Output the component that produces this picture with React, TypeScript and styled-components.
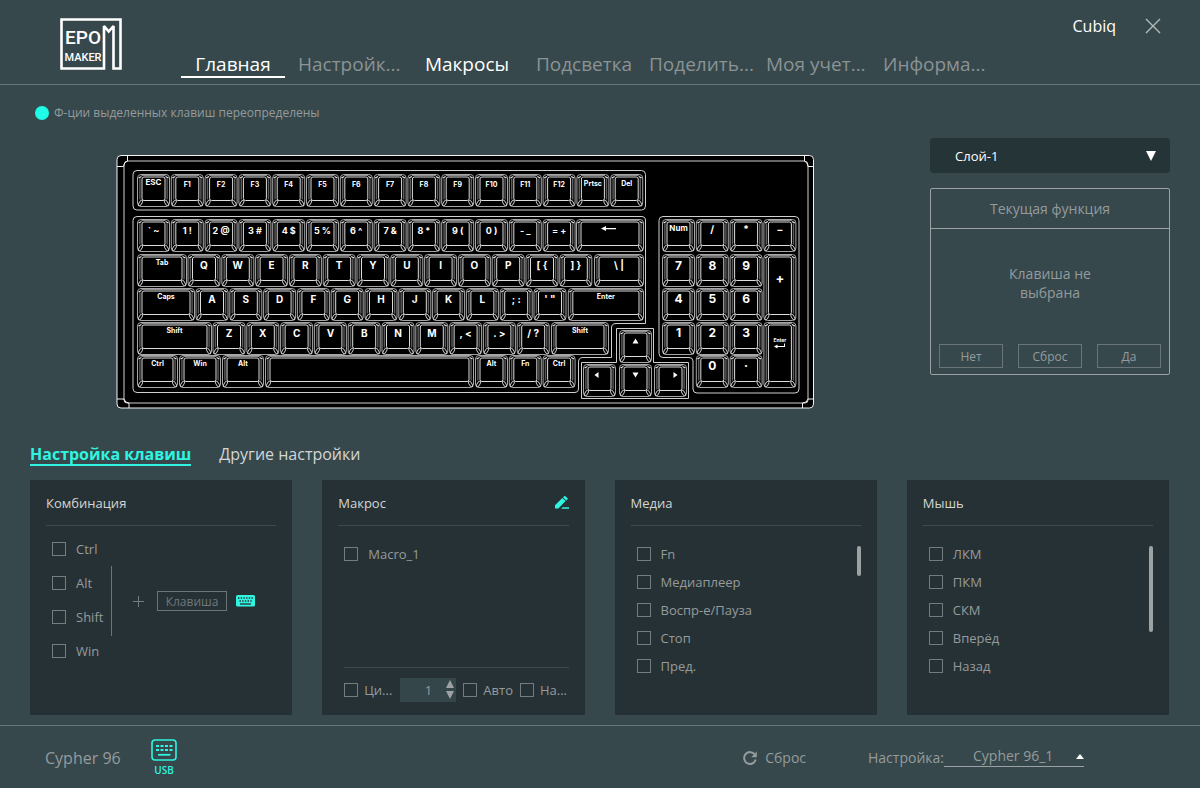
import React from "react";
import styled, { createGlobalStyle, css } from "styled-components";

const color = {
  page: "#36484c",
  card: "#263135",
  field: "#243437",
  line: "#6a7577",
  softLine: "#3d4b4f",
  frame: "#9aa2a4",
  box: "#737c7f",
  text: "#959b9c",
  title: "#d3d6d6",
  white: "#ffffff",
  accent: "#2ff5e0",
};

const GlobalStyle = createGlobalStyle`
  *, *::before, *::after { box-sizing: border-box; }
  body {
    margin: 0;
    background: ${color.page};
    color: ${color.text};
    font-family: "Open Sans", "Noto Sans", sans-serif;
    font-size: 13px;
    line-height: 18px;
  }
  button, input, select { font: inherit; color: inherit; }
  button { padding: 0; background: none; border: 0; cursor: pointer; }
`;

const Page = styled.div`
  min-height: 100vh;
  display: flex;
  flex-direction: column;
`;

/* ---------- header ---------- */

const Header = styled.header`
  display: flex;
  height: 85px;
  padding: 0 35px 0 60px;
  border-bottom: 1px solid ${color.line};
`;

const Logo = styled.svg`
  flex: none;
  width: 62px;
  height: 52px;
  margin-top: 18px;
`;

const Nav = styled.nav`
  display: flex;
  align-items: flex-end;
  gap: 13px;
  margin-left: 59px;
  padding-bottom: 6px;
`;

const NavItem = styled.button<{ $bright?: boolean; $active?: boolean; $cut?: boolean }>`
  width: 104px;
  height: 30px;
  padding-top: 4px;
  font-size: 19px;
  line-height: 24px;
  white-space: nowrap;
  text-align: ${(p) => (p.$cut ? "left" : "center")};
  color: ${(p) => (p.$bright ? color.white : "#8b9394")};
  border-bottom: 2px solid ${(p) => (p.$active ? color.white : "transparent")};
`;

const Account = styled.div`
  display: flex;
  align-items: center;
  gap: 25px;
  height: 24px;
  margin: 14px 0 0 auto;
  font-size: 16px;
  color: ${color.white};
`;

const CloseButton = styled.button`
  display: flex;
  align-items: center;
  justify-content: center;
  width: 24px;
  height: 24px;
  color: #b4babb;
`;

/* ---------- workspace ---------- */

const Main = styled.main`
  display: flex;
  flex-direction: column;
  padding: 18px 30px 10px;
`;

const Hint = styled.p`
  display: flex;
  align-items: center;
  gap: 5px;
  height: 20px;
  margin: 0 0 15px 5px;
  font-size: 12px;
`;

const Dot = styled.span`
  width: 14px;
  height: 14px;
  border-radius: 50%;
  background: #1ffbe6;
`;

const Stage = styled.section`
  display: flex;
  gap: 30px;
`;

const Deck = styled.div`
  flex: 1;
  min-width: 0;
  display: flex;
  justify-content: center;
  padding-top: 16px;
`;

const Board = styled.svg`
  display: block;
  width: 698px;
  max-width: 100%;
  height: auto;
  font-family: Inter, "Open Sans", sans-serif;
  font-weight: 700;
`;

const Side = styled.aside`
  flex: none;
  width: 240px;
  display: flex;
  flex-direction: column;
  gap: 15px;
`;

const Picker = styled.div`
  position: relative;
  svg {
    position: absolute;
    pointer-events: none;
  }
`;

const LayerPicker = styled(Picker)`
  svg {
    right: 14px;
    top: 13px;
  }
`;

const LayerSelect = styled.select`
  display: block;
  appearance: none;
  width: 100%;
  height: 35px;
  padding: 0 25px;
  border: 0;
  border-radius: 4px;
  background: ${color.field};
  color: ${color.white};
  font-size: 13px;
`;

const FunctionBox = styled.section`
  display: flex;
  flex-direction: column;
  height: 187px;
  border: 1px solid ${color.frame};
  border-radius: 2px;
  font-size: 14px;
`;

const FunctionTitle = styled.h2`
  margin: 0;
  height: 40px;
  border-bottom: 1px solid ${color.frame};
  font-size: 14px;
  font-weight: 400;
  line-height: 40px;
  text-align: center;
`;

const FunctionText = styled.p`
  flex: 1;
  width: 100px;
  margin: 0 auto;
  padding-top: 35px;
  line-height: 19px;
  text-align: center;
`;

const FunctionActions = styled.div`
  display: flex;
  justify-content: space-between;
  padding: 0 8px 6px;
`;

const SmallButton = styled.button`
  width: 64px;
  height: 24px;
  padding-top: 2px;
  border: 1px solid ${color.line};
  font-size: 12px;
  line-height: 20px;
`;

/* ---------- setting tabs and cards ---------- */

const Tabs = styled.div`
  display: flex;
  gap: 28px;
  margin: 34px 0 14px;
`;

const Tab = styled.button<{ $active?: boolean }>`
  height: 23px;
  padding-top: 2px;
  font-size: 16px;
  line-height: 19px;
  color: ${color.title};
  border-bottom: 2px solid transparent;
  ${(p) =>
    p.$active &&
    css`
      color: ${color.accent};
      font-weight: 700;
      border-color: ${color.accent};
    `}
`;

const Cards = styled.div`
  display: grid;
  grid-template-columns: repeat(4, minmax(0, 1fr));
  gap: 30px;
  margin-right: 1px;
`;

const Card = styled.section`
  display: flex;
  flex-direction: column;
  height: 235px;
  padding: 0 16px;
  background: ${color.card};
`;

const CardHead = styled.header`
  display: flex;
  align-items: center;
  justify-content: space-between;
  height: 46px;
  border-bottom: 1px solid ${color.softLine};
`;

const CardTitle = styled.h3`
  margin: 0;
  font-size: 13px;
  font-weight: 400;
  color: ${color.title};
`;

const CardBody = styled.div`
  flex: 1;
  display: flex;
  justify-content: space-between;
  padding: 19px 0 0 6px;
`;

const List = styled.ul<{ $step: number }>`
  display: flex;
  flex-direction: column;
  gap: ${(p) => p.$step - 18}px;
  margin: 0;
  padding: 0;
  list-style: none;
`;

const CheckLabel = styled.label<{ $gap?: number }>`
  display: flex;
  align-items: center;
  gap: ${(p) => p.$gap ?? 10}px;
  white-space: nowrap;
`;

const CheckBox = styled.input.attrs({ type: "checkbox" })`
  appearance: none;
  flex: none;
  width: 14px;
  height: 14px;
  margin: 0;
  border: 1px solid ${color.box};
  &:checked {
    background: ${color.accent};
  }
`;

const Thumb = styled.div<{ $length: number }>`
  width: 4px;
  height: ${(p) => p.$length}px;
  margin-top: 1px;
  border-radius: 2px;
  background: #9da2a3;
`;

const ComboBody = styled.div`
  display: flex;
  align-items: flex-start;
  padding: 14px 0 0 6px;
`;

const Modifiers = styled.div`
  width: 59px;
`;

const Bracket = styled.div`
  width: 1px;
  height: 70px;
  margin-top: 26px;
  background: ${color.line};
`;

const KeyEntry = styled.div`
  display: flex;
  align-items: center;
  margin: 51px 0 0 21px;
`;

const KeyInput = styled.input`
  width: 70px;
  height: 20px;
  margin: 0 9px 0 13px;
  padding: 0;
  border: 1px solid ${color.line};
  background: transparent;
  font-size: 12px;
  text-align: center;
  &::placeholder {
    color: #6f787b;
    opacity: 1;
  }
`;

const IconButton = styled.button<{ $muted?: boolean }>`
  display: flex;
  color: ${(p) => (p.$muted ? "#9da2a3" : color.accent)};
`;

const MacroFoot = styled.div`
  display: flex;
  align-items: center;
  height: 48px;
  margin-left: 6px;
  padding-bottom: 4px;
  border-top: 1px solid ${color.softLine};
  gap: 7px;
`;

const Spinner = styled.div`
  display: flex;
  width: 56px;
  height: 24px;
  background: #34464a;
  margin-left: 1px;
`;

const SpinnerInput = styled.input.attrs({ type: "number" })`
  appearance: textfield;
  flex: 1;
  min-width: 0;
  padding: 0 0 0 12px;
  border: 0;
  background: transparent;
  text-align: center;
  &::-webkit-inner-spin-button {
    appearance: none;
    margin: 0;
  }
`;

const SpinnerArrows = styled.div`
  display: flex;
  flex-direction: column;
  align-items: center;
  justify-content: center;
  gap: 3px;
  width: 12px;
`;

/* ---------- footer ---------- */

const Footer = styled.footer`
  display: flex;
  align-items: center;
  height: 63px;
  margin-top: auto;
  padding: 2px 116px 0 45px;
  border-top: 1px solid ${color.line};
  font-size: 14px;
`;

const DeviceName = styled.span`
  width: 78px;
  font-size: 16px;
  white-space: nowrap;
`;

const Connection = styled.div`
  display: flex;
  flex-direction: column;
  align-items: center;
  gap: 2px;
  margin-left: 28px;
  color: ${color.accent};
  font-size: 10px;
  font-weight: 600;
  line-height: 14px;
`;

const ResetButton = styled.button`
  display: flex;
  align-items: center;
  gap: 8px;
  margin-left: auto;
`;

const ProfileLabel = styled.label`
  margin-left: 62px;
`;

const ProfilePicker = styled(Picker)`
  svg {
    right: 0;
    top: 9px;
  }
`;

const ProfileSelect = styled.select`
  display: block;
  appearance: none;
  width: 140px;
  height: 22px;
  margin-bottom: 4px;
  padding: 0 0 0 29px;
  border: 0;
  border-bottom: 1px solid ${color.frame};
  border-radius: 0;
  background: transparent;
`;

/* ---------- keyboard drawing ---------- */

type KeySpec = {
  x: number;
  y: number;
  w: number;
  h: number;
  label: string;
  size: number;
  dy: number;
};

const UNIT = 33.8;
const SMALL = 7;

const run = (labels: string[], x: number, y: number, size: number, dy = 10): KeySpec[] =>
  labels.map((label, i) => ({ x: x + i * UNIT, y, w: 32, h: 32, label, size, dy }));

const wide = (label: string, x: number, end: number, y: number, dy = 8, size = SMALL): KeySpec => ({
  x,
  y,
  w: end - x,
  h: 32,
  label,
  size,
  dy,
});

const KEYS: KeySpec[] = [
  ...run(["ESC"], 21.5, 20.5, 8, 8),
  ...run(["F1", "F2", "F3", "F4", "F5", "F6", "F7", "F8", "F9", "F10", "F11", "F12"], 55.3, 20.5, SMALL),
  ...run(["Prtsc", "Del"], 460.9, 20.5, SMALL, 9),
  ...run(["` ~", "1 !", "2 @", "3 #", "4 $", "5 %", "6 ^", "7 &", "8 *", "9 (", "0 )", "- _", "= +"], 21.5, 65.5, 9, 11),
  wide("", 460.5, 527.5, 65.5),
  wide("Tab", 21.5, 70.5, 100.5),
  ...run(["Q", "W", "E", "R", "T", "Y", "U", "I", "O", "P", "[ {", "] }"], 72, 100.5, 10, 11),
  wide("\\ |", 478.5, 527.5, 100.5, 11, 10),
  wide("Caps", 21.5, 78.5, 134.5),
  ...run(["A", "S", "D", "F", "G", "H", "J", "K", "L", "; :", "' \""], 80, 134.5, 10, 11),
  wide("Enter", 452.3, 527.5, 134.5),
  wide("Shift", 21.5, 95.5, 168.5),
  ...run(["Z", "X", "C", "V", "B", "N", "M", ", <", ". >", "/ ?"], 97, 168.5, 10, 11),
  wide("Shift", 435.5, 492.5, 168.5),
  wide("Ctrl", 21.5, 61.5, 201.5),
  wide("Win", 63.5, 104.5, 201.5),
  wide("Alt", 106.5, 147.5, 201.5),
  wide("", 149.5, 357.5, 201.5),
  ...run(["Alt", "Fn", "Ctrl"], 359.5, 201.5, SMALL, 8),
  ...run([""], 503.5, 176.5, SMALL),
  ...run([""], 467.5, 210.5, SMALL),
  ...run([""], 503.5, 210.5, SMALL),
  ...run([""], 538.5, 210.5, SMALL),
  ...run(["Num"], 546.5, 65.5, 8, 9),
  ...run(["/", "*", "−"], 580.3, 65.5, 10, 10),
  ...run(["7", "8", "9"], 546.5, 100.5, 12, 11),
  ...run(["4", "5", "6"], 546.5, 134.5, 12, 10),
  ...run(["1", "2", "3"], 546.5, 168.5, 12, 10),
  ...run(["0", "·"], 580.3, 201.5, 12, 10),
  { x: 647.9, y: 100.5, w: 32, h: 66, label: "+", size: 13, dy: 24 },
  { x: 647.9, y: 168.5, w: 32, h: 65, label: "Enter", size: 5, dy: 18 },
];

function Key({ x, y, w, h, label, size, dy }: KeySpec) {
  const r = x + w;
  const b = y + h;
  return (
    <g fill="none">
      <rect x={x} y={y} width={w} height={h} rx="3.5" fill="#000" stroke="#a6a6a6" />
      <path d={`M${x + 2.4} ${y + 4}V${b - 7}M${r - 2.4} ${y + 4}V${b - 7}`} stroke="#5c5c5c" strokeWidth="1.4" />
      <path d={`M${x + 4} ${y + 1}H${r - 4}`} stroke="#8c8c8c" />
      <rect x={x + 4.5} y={y + 2.5} width={w - 9} height={h - 8.5} rx="2" stroke="#dcdcdc" />
      <path
        d={`M${x + 1} ${y + 3.5}L${x + 4} ${y + 2}M${r - 1} ${y + 3.5}L${r - 4} ${y + 2}`}
        stroke="#e8e8e8"
        strokeWidth="1.2"
      />
      <ellipse cx={x + 3} cy={b - 3.5} rx="1.3" ry="3.2" transform={`rotate(32 ${x + 3} ${b - 3.5})`} stroke="#cfcfcf" strokeWidth="0.9" />
      <ellipse cx={r - 3} cy={b - 3.5} rx="1.3" ry="3.2" transform={`rotate(-32 ${r - 3} ${b - 3.5})`} stroke="#cfcfcf" strokeWidth="0.9" />
      {label && (
        <text x={x + w / 2} y={y + dy + size * 0.36} fontSize={size} fill="#fff" textAnchor="middle">
          {label}
        </text>
      )}
    </g>
  );
}

function Keyboard() {
  return (
    <Board viewBox="0 0 698 255" role="img" aria-label="Cypher 96">
      <rect x="1" y="1.5" width="696.5" height="252.5" rx="4" fill="#000" stroke="#f2f2f2" />
      <g fill="none" stroke="#d0d0d0">
        <path d="M8 11V246Q8 249 11 249H689Q692 249 692 246V11Q692 7 688 7H12Q8 7 8 11Z" />
        <path
          d="M1 12.5H7.500Q8 8 11.500 7V2M697 12.5H692Q691.500 8 688.500 7V2M1 245H8Q9 249 13 249V254M697 245H692Q691 249 686.500 249V254"
          stroke="#f2f2f2"
        />
        <rect x="17" y="16.5" width="512.5" height="39.5" rx="4" />
        <path d="M21 62.5H526Q529.5 62.5 529.5 66V169.500H500Q495.500 169.500 495.500 174V203.500H467Q462.500 203.500 462.500 208V235Q462.500 238.500 459 238.500H21Q17 238.500 17 234.500V66.500Q17 62.500 21 62.500Z" />
        <path d="M500.500 174.500H537.500V208.500H572.500V244.500H465.500V208.500H500.500Z" />
        <path d="M547 62.500H679Q683 62.500 683 66.500V235Q683 239 679 239H581Q577 239 577 235V207Q577 203.500 573 203.500H547Q543 203.500 543 199.500V66.500Q543 62.500 547 62.500Z" />
      </g>
      {KEYS.map((key, i) => (
        <Key key={i} {...key} />
      ))}
      <g fill="#fff">
        <path d="M485 74.500L490 72V74H500V75.200H490V77Z" />
        <path d="M519.500 184.500L522.500 189.500H516.500Z" />
        <path d="M519.500 223.500L522.500 218.500H516.500Z" />
        <path d="M478.500 221L482.500 218V224Z" />
        <path d="M561.500 221L557.500 218V224Z" />
        <path d="M658 192.500L661.500 190.500V192H668V189.500H669V193H661.500V194.500Z" />
      </g>
    </Board>
  );
}

/* ---------- small icons ---------- */

function Triangle({ width, height, up }: { width: number; height: number; up?: boolean }) {
  const points = up ? `0,${height} ${width},${height} ${width / 2},0` : `0,0 ${width},0 ${width / 2},${height}`;
  return (
    <svg width={width} height={height} aria-hidden="true">
      <polygon points={points} fill="currentColor" />
    </svg>
  );
}

const CloseIcon = () => (
  <svg width="16" height="16" viewBox="0 0 16 16" stroke="currentColor" strokeWidth="1.400" aria-hidden="true">
    <path d="M1 1L15 15M15 1L1 15" />
  </svg>
);

const ResetIcon = () => (
  <svg width="14" height="14" viewBox="0 0 14 14" aria-hidden="true">
    <path
      d="M11.900 3.700A5.900 5.900 0 1 0 12.700 8.600"
      fill="none"
      stroke="currentColor"
      strokeWidth="2"
    />
    <path d="M13.800 .6V6.200H8.200Z" fill="currentColor" />
  </svg>
);

const PencilIcon = () => (
  <svg width="14" height="13" viewBox="0 0 14 13" fill="currentColor" aria-hidden="true">
    <path d="M0 12.500V9.200L7.300 2L10.600 5L3.400 12.500ZM8 1.400L9.200 .3Q9.800-.2 10.400.3L12.400 2.100Q13 2.800 12.400 3.400L11.300 4.400Z" />
    <path d="M7.500 11.300H14V12.700H6.300Z" />
  </svg>
);

const KeyboardIcon = () => (
  <svg width="19" height="12" viewBox="0 0 19 12" aria-hidden="true">
    <rect width="19" height="11.500" rx="1.500" fill="currentColor" />
    <path d="M2 3H17M3.500 6H16" stroke={color.card} strokeWidth="1.300" strokeDasharray="1.400 1.300" />
    <path d="M4 9H15" stroke={color.card} strokeWidth="1.300" />
  </svg>
);

const UsbKeyboardIcon = () => (
  <svg width="26" height="22" viewBox="0 0 26 22" fill="none" stroke="currentColor" aria-hidden="true">
    <rect x="1" y="1" width="24" height="20" rx="3" strokeWidth="1.600" />
    <path d="M5 7H21.500M5 11H21.500" strokeWidth="2" strokeDasharray="3 1.500" />
    <path d="M7 15.800H19.500" strokeWidth="1.800" />
  </svg>
);

function LogoMark() {
  return (
    <Logo viewBox="0 0 62 52" role="img" aria-label="EPOMAKER">
      <path
        d="M44 50.500H1.500V1.500H60.500V50.500H53.500V8L48.700 13.500L44 8V50.500Z"
        fill="none"
        stroke="#fff"
        strokeWidth="2.600"
        strokeMiterlimit="2"
      />
      <g fill="#fff" fontFamily="Roboto, sans-serif" fontWeight="500" textAnchor="middle">
        <text x="23" y="26" fontSize="19">
          EPO
        </text>
        <text x="23" y="43" fontSize="11">
          MAKER
        </text>
      </g>
    </Logo>
  );
}

/* ---------- page ---------- */

const NAV = [
  { text: "Главная", bright: true, active: true },
  { text: "Настройк...", cut: true },
  { text: "Макросы", bright: true },
  { text: "Подсветка" },
  { text: "Поделить...", cut: true },
  { text: "Моя учет...", cut: true },
  { text: "Информа...", cut: true },
];

function Check({ text, gap }: { text: string; gap?: number }) {
  return (
    <CheckLabel $gap={gap}>
      <CheckBox />
      {text}
    </CheckLabel>
  );
}

function CheckList({ items, step = 28 }: { items: string[]; step?: number }) {
  return (
    <List $step={step}>
      {items.map((item) => (
        <li key={item}>
          <Check text={item} />
        </li>
      ))}
    </List>
  );
}

export default function App() {
  return (
    <Page>
      <GlobalStyle />
      <Header>
        <LogoMark />
        <Nav>
          {NAV.map((item) => (
            <NavItem key={item.text} $bright={item.bright} $active={item.active} $cut={item.cut}>
              {item.text}
            </NavItem>
          ))}
        </Nav>
        <Account>
          <span>Cubiq</span>
          <CloseButton aria-label="Закрыть">
            <CloseIcon />
          </CloseButton>
        </Account>
      </Header>

      <Main>
        <Hint>
          <Dot />
          Ф-ции выделенных клавиш переопределены
        </Hint>

        <Stage>
          <Deck>
            <Keyboard />
          </Deck>
          <Side>
            <LayerPicker>
              <LayerSelect aria-label="Слой">
                <option>Слой-1</option>
              </LayerSelect>
              <svg width="10" height="10" aria-hidden="true">
                <polygon points="0,0 10,0 5,10" fill="#fff" />
              </svg>
            </LayerPicker>
            <FunctionBox>
              <FunctionTitle>Текущая функция</FunctionTitle>
              <FunctionText>Клавиша не выбрана</FunctionText>
              <FunctionActions>
                <SmallButton>Нет</SmallButton>
                <SmallButton>Сброс</SmallButton>
                <SmallButton>Да</SmallButton>
              </FunctionActions>
            </FunctionBox>
          </Side>
        </Stage>

        <Tabs>
          <Tab $active>Настройка клавиш</Tab>
          <Tab>Другие настройки</Tab>
        </Tabs>

        <Cards>
          <Card>
            <CardHead>
              <CardTitle>Комбинация</CardTitle>
            </CardHead>
            <ComboBody>
              <Modifiers>
                <CheckList items={["Ctrl", "Alt", "Shift", "Win"]} step={34} />
              </Modifiers>
              <Bracket />
              <KeyEntry>
                <svg width="11" height="11" stroke="#737c7f" aria-hidden="true">
                  <path d="M5.500 0V11M0 5.500H11" />
                </svg>
                <KeyInput placeholder="Клавиша" aria-label="Клавиша" />
                <IconButton aria-label="Клавиатура">
                  <KeyboardIcon />
                </IconButton>
              </KeyEntry>
            </ComboBody>
          </Card>

          <Card>
            <CardHead>
              <CardTitle>Макрос</CardTitle>
              <IconButton aria-label="Изменить">
                <PencilIcon />
              </IconButton>
            </CardHead>
            <CardBody>
              <CheckList items={["Macro_1"]} />
            </CardBody>
            <MacroFoot>
              <Check text="Ци..." gap={6} />
              <Spinner>
                <SpinnerInput defaultValue={1} min={1} aria-label="Повторы" />
                <SpinnerArrows>
                  <IconButton $muted aria-label="Больше">
                    <Triangle width={8} height={8} up />
                  </IconButton>
                  <IconButton $muted aria-label="Меньше">
                    <Triangle width={8} height={8} />
                  </IconButton>
                </SpinnerArrows>
              </Spinner>
              <Check text="Авто" gap={6} />
              <Check text="На..." gap={6} />
            </MacroFoot>
          </Card>

          <Card>
            <CardHead>
              <CardTitle>Медиа</CardTitle>
            </CardHead>
            <CardBody>
              <CheckList items={["Fn", "Медиаплеер", "Воспр-е/Пауза", "Стоп", "Пред."]} />
              <Thumb $length={30} />
            </CardBody>
          </Card>

          <Card>
            <CardHead>
              <CardTitle>Мышь</CardTitle>
            </CardHead>
            <CardBody>
              <CheckList items={["ЛКМ", "ПКМ", "СКМ", "Вперёд", "Назад"]} />
              <Thumb $length={86} />
            </CardBody>
          </Card>
        </Cards>
      </Main>

      <Footer>
        <DeviceName>Cypher 96</DeviceName>
        <Connection>
          <UsbKeyboardIcon />
          USB
        </Connection>
        <ResetButton>
          <ResetIcon />
          Сброс
        </ResetButton>
        <ProfileLabel htmlFor="profile">Настройка:</ProfileLabel>
        <ProfilePicker>
          <ProfileSelect id="profile">
            <option>Cypher 96_1</option>
          </ProfileSelect>
          <svg width="8" height="5" aria-hidden="true">
            <polygon points="0,5 8,5 4,0" fill="#fff" />
          </svg>
        </ProfilePicker>
      </Footer>
    </Page>
  );
}
